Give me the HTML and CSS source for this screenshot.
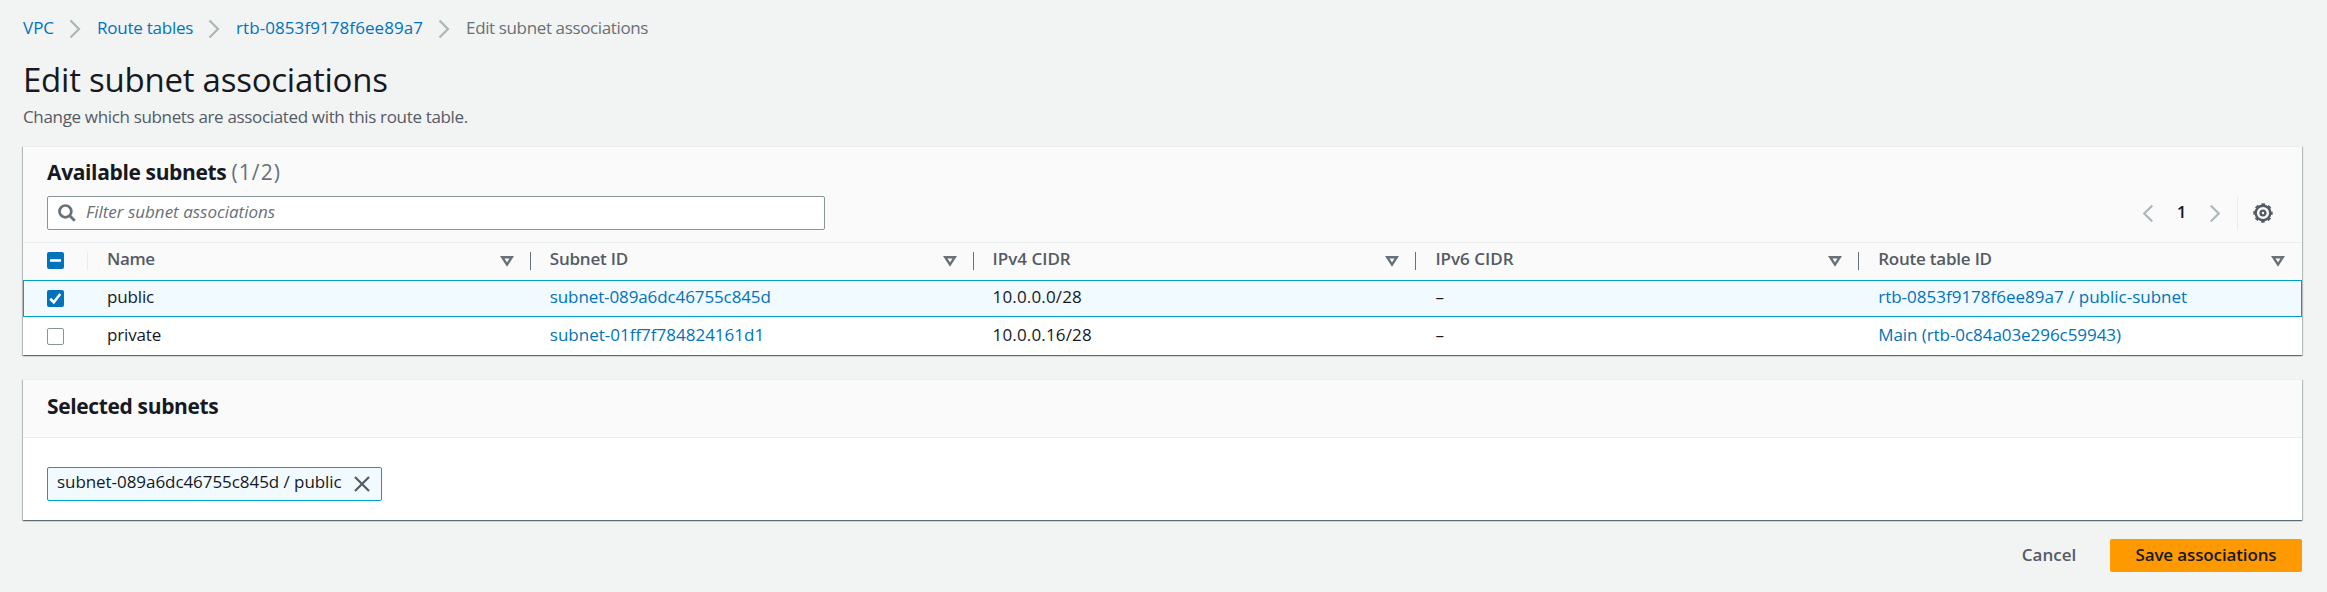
FILE: index.html
```html
<!DOCTYPE html>
<html lang="en">
<head>
<meta charset="utf-8">
<title>Edit subnet associations</title>
<link rel="stylesheet" href="styles.css">
</head>
<body>
<svg class="defs" aria-hidden="true">
  <symbol id="chevron" viewBox="0 0 12 20"><path d="M1.5 1.5 10 10 1.5 18.5"/></symbol>
  <symbol id="sort" viewBox="0 0 14 12"><path d="M2.2 2.2h9.6L7 9.6z"/></symbol>
</svg>
<nav class="breadcrumbs">
  <a class="crumb">VPC</a>
  <svg class="crumb-sep"><use href="#chevron"/></svg>
  <a class="crumb crumb-tables">Route tables</a>
  <svg class="crumb-sep"><use href="#chevron"/></svg>
  <a class="crumb crumb-id">rtb-0853f9178f6ee89a7</a>
  <svg class="crumb-sep"><use href="#chevron"/></svg>
  <span class="crumb crumb-current">Edit subnet associations</span>
</nav>
<header class="page-header">
  <h1>Edit subnet associations</h1>
  <p>Change which subnets are associated with this route table.</p>
</header>
<main>
  <section class="card available">
    <div class="card-top">
      <h2>Available subnets <span class="count">(1/2)</span></h2>
      <div class="tools">
        <div class="filter">
          <svg class="search" viewBox="0 0 18 18"><circle cx="7.4" cy="7.4" r="5.9"/><path d="m11.8 11.8 5 5"/></svg>
          <span>Filter subnet associations</span>
        </div>
        <div class="pager">
          <svg class="page-arrow prev"><use href="#chevron"/></svg>
          <span class="page">1</span>
          <svg class="page-arrow"><use href="#chevron"/></svg>
          <div class="settings">
            <svg class="gear" viewBox="0 0 20 20"><circle cx="10" cy="10" r="7.3"/><circle class="teeth" cx="10" cy="10" r="8.9"/><circle cx="10" cy="10" r="2.4"/></svg>
          </div>
        </div>
      </div>
    </div>
    <div class="row head">
      <div class="cell check"><span class="box on"><svg viewBox="0 0 17 17"><path d="M3 8.5h11"/></svg></span></div>
      <div class="cell"><span class="name">Name</span><svg class="sort"><use href="#sort"/></svg></div>
      <div class="cell"><span class="label">Subnet ID</span><svg class="sort"><use href="#sort"/></svg></div>
      <div class="cell"><span>IPv4 CIDR</span><svg class="sort"><use href="#sort"/></svg></div>
      <div class="cell"><span>IPv6 CIDR</span><svg class="sort"><use href="#sort"/></svg></div>
      <div class="cell"><span class="label">Route table ID</span><svg class="sort"><use href="#sort"/></svg></div>
    </div>
    <div class="row selected">
      <div class="cell check"><span class="box on"><svg viewBox="0 0 17 17"><path d="m3.2 8.8 3.6 3.5 6.400-8.300"/></svg></span></div>
      <div class="cell"><span class="word">public</span></div>
      <div class="cell"><a class="subnet">subnet-089a6dc46755c845d</a></div>
      <div class="cell"><span class="ip">10.0.0.0/28</span></div>
      <div class="cell">–</div>
      <div class="cell"><a>rtb-0853f9178f6ee89a7 / public-subnet</a></div>
    </div>
    <div class="row plain">
      <div class="cell check"><span class="box"></span></div>
      <div class="cell"><span class="word">private</span></div>
      <div class="cell"><a>subnet-01ff7f784824161d1</a></div>
      <div class="cell"><span class="ip">10.0.0.16/28</span></div>
      <div class="cell">–</div>
      <div class="cell"><a class="main-table">Main (rtb-0c84a03e296c59943)</a></div>
    </div>
  </section>
  <section class="card chosen">
    <div class="card-title"><h2>Selected subnets</h2></div>
    <div class="card-body">
      <div class="token"><span>subnet-089a6dc46755c845d / public</span><svg viewBox="0 0 16 16"><path d="m1 1 14 14M15 1 1 15"/></svg></div>
    </div>
  </section>
</main>
<footer>
  <button class="cancel">Cancel</button>
  <button class="save">Save associations</button>
</footer>
</body>
</html>
```
FILE: styles.css
```css
* { box-sizing: border-box; }
body {
  margin: 0;
  height: 592px;
  padding: 16px 25px 0 23px;
  background: #f2f3f3;
  color: #16191f;
  font: 17px/24px "Open Sans", "Noto Sans", sans-serif;
  overflow: hidden;
}
h1, h2, p { margin: 0; }
svg { display: block; fill: none; flex: none; }
a { color: #0073bb; }
.defs { position: absolute; width: 0; height: 0; }

.breadcrumbs { display: flex; align-items: center; height: 26px; }
.crumb { padding-bottom: 2px; }
.crumb-sep { width: 12px; height: 20px; margin: 0 16px 0 15px; stroke: #aab7b8; stroke-width: 2.2; }
.crumb-tables { letter-spacing: -.25px; }
.crumb-id { letter-spacing: .07px; }
.crumb-current { letter-spacing: -.37px; color: #687078; }

.page-header { padding-top: 17px; height: 104px; }
h1 { font-size: 33px; line-height: 42px; font-weight: 400; letter-spacing: -.24px; }
.page-header p { margin-top: 4px; letter-spacing: -.34px; color: #545b64; }

.card {
  background: #fff;
  border-top: 1px solid #eaeded;
  box-shadow: 0 1px 1px 0 rgba(0, 28, 36, .4), 1px 1px 1px 0 rgba(0, 28, 36, .2), -1px 1px 1px 0 rgba(0, 28, 36, .2);
}
h2 { font-size: 21px; line-height: 26px; font-weight: 700; letter-spacing: -.36px; }
.count { font-weight: 400; letter-spacing: 1.1px; color: #687078; }
.available { height: 209px; }
.card-top { height: 96px; padding: 12px 24px 0; background: #fafafa; border-bottom: 1px solid #eaeded; }
.tools { display: flex; justify-content: space-between; margin-top: 11px; }
.filter {
  display: flex;
  align-items: center;
  gap: 10px;
  width: 778px;
  height: 34px;
  padding: 0 10px 2px;
  border: 1px solid #879596;
  border-radius: 2px;
  background: #fff;
  color: #687078;
  font-style: italic;
}
.search { width: 18px; height: 18px; margin-top: 2px; stroke: #687078; stroke-width: 2.7; }
.pager { display: flex; align-items: center; height: 34px; margin-right: 5px; }
.page-arrow { width: 12px; height: 19px; stroke: #aab7b8; stroke-width: 2.2; }
.prev { transform: scaleX(-1); }
.page { width: 55px; padding-bottom: 3px; text-align: center; font-weight: 600; }
.settings { display: flex; align-items: center; height: 34px; margin-left: 16px; padding-left: 15px; border-left: 1px solid #eaeded; }
.gear { width: 20px; height: 20px; stroke: #545b64; stroke-width: 2.4; }
.gear .teeth { stroke-width: 1.6; stroke-dasharray: 3.7 3.29; stroke-dashoffset: 1.85; }

.row { display: grid; grid-template-columns: 65px repeat(5, 1fr); height: 38px; }
.cell { display: flex; align-items: center; justify-content: space-between; padding: 0 17px 4px 19px; }
.cell.check { padding: 0 0 0 24px; }
.head { height: 37px; background: #fafafa; color: #545b64; font-weight: 600; }
.head .cell {
  padding-bottom: 5px;
  background: linear-gradient(#687078, #687078) right 0 top 9px / 1px 18px no-repeat;
}
.head .check { padding-bottom: 2px; background-image: linear-gradient(#eaeded, #eaeded); }
.head .cell:last-child { background: none; }
.sort { width: 14px; height: 12px; margin-top: 4px; stroke: #687078; stroke-width: 2.4; }
.selected { height: 37px; background: #f1faff; outline: 1px solid #00a1c9; outline-offset: -1px; }
.plain .cell { padding-bottom: 2px; }
.plain .check { padding: 1px 0 0 24px; }
.box { width: 17px; height: 17px; border: 1px solid #879596; border-radius: 2px; background: #fff; }
.box.on { border: 0; background: #0073bb; stroke: #fff; stroke-width: 2.6; }
.name { letter-spacing: -.4px; }
.label { letter-spacing: -.22px; }
.word { letter-spacing: -.15px; }
.subnet { letter-spacing: -.11px; }
.main-table { letter-spacing: -.06px; }
.ip { letter-spacing: .15px; }

.chosen { height: 141px; margin-top: 24px; }
.card-title { height: 58px; padding: 13px 24px 0; background: #fafafa; border-bottom: 1px solid #eaeded; }
.card-body { padding: 29px 24px 0; }
.token {
  display: flex;
  align-items: center;
  justify-content: space-between;
  width: 335px;
  height: 34px;
  padding: 0 11px 4px 9px;
  border: 1px solid #00a1c9;
  border-radius: 2px;
  background: #f1faff;
  letter-spacing: -.06px;
}
.token svg { width: 16px; height: 16px; margin-top: 3px; stroke: #545b64; stroke-width: 2.2; }

footer { display: flex; justify-content: flex-end; margin-top: 19px; }
button { height: 33px; padding: 0 0 2px; border: 0; border-radius: 2px; background: none; font: 600 17px/24px "Open Sans", "Noto Sans", sans-serif; }
.cancel { width: 122px; color: #545b64; }
.save { width: 192px; background: #f90; color: #16191f; letter-spacing: -.13px; }
```
